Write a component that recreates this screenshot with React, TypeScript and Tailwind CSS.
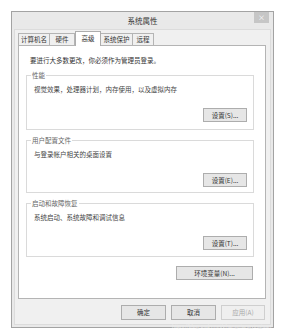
const tabs = [
  { label: "计算机名", w: "w-[32px]" },
  { label: "硬件", w: "w-[26px]" },
  { label: "高级", w: "w-[26px]", active: true },
  { label: "系统保护", w: "w-[33px]" },
  { label: "远程", w: "w-[22px]" },
];

interface GroupProps {
  title: string;
  desc: string;
  button: string;
  h: string;
}

function Group({ title, desc, button, h }: GroupProps) {
  return (
    <div className={`relative mt-[10px] border border-[#dadada] flex flex-col ${h}`}>
      <span className="absolute -top-[5px] left-[4px] px-[1px] bg-white text-[6.5px] leading-[9px] text-[#666]">
        {title}
      </span>
      <div className="pl-[7px] pt-[9px] text-[6.5px] leading-[9px] text-[#444]">{desc}</div>
      <div className="flex justify-end pr-[6px] mt-[14px]">
        <Btn label={button} w="w-[44px]" />
      </div>
    </div>
  );
}

function Btn({ label, w, disabled = false }: { label: string; w: string; disabled?: boolean }) {
  return (
    <div
      className={`${w} h-[14px] flex items-center justify-center border text-[6.5px] leading-none ${
        disabled
          ? "border-[#cfcfcf] bg-[#efefef] text-[#a8a8a8]"
          : "border-[#adadad] bg-[#e6e6e6] text-[#333]"
      }`}
    >
      {label}
    </div>
  );
}

export default function App() {
  return (
    <div className="relative w-[300px] h-[336px] bg-white pt-[11px] pl-[11px] font-['Noto_Sans_CJK_SC','Liberation_Sans',sans-serif]">
      <div className="w-[263px] h-[317px] border border-[#a3a3a3] bg-[#e9e9e9] flex flex-col">
        {/* title bar */}
        <div className="relative h-[17px] flex items-center justify-center text-[7.5px] text-[#333]">
          系统属性
          <div className="absolute right-[4px] top-0 w-[15px] h-[11px] bg-[#c6c6c6] flex items-center justify-center text-white text-[7px] leading-none">
            ×
          </div>
        </div>

        <div className="mx-[2px] mb-[2px] flex-1 border border-[#dcdcdc] bg-[#f0f0f0] pl-[3px] pr-[4px] pt-[1px] flex flex-col">
          {/* tabs */}
          <div className="flex items-end h-[14px]">
            {tabs.map((t) =>
              t.active ? (
                <div
                  key={t.label}
                  className={`${t.w} h-[15px] -mb-[1px] relative z-10 bg-white border border-b-0 border-[#adadad] flex items-center justify-center text-[6.5px] text-[#333]`}
                >
                  {t.label}
                </div>
              ) : (
                <div
                  key={t.label}
                  className={`${t.w} h-[12px] bg-[#f0f0f0] border border-b-0 border-[#b4b4b4] -ml-[1px] first:ml-0 flex items-center justify-center text-[6.5px] text-[#333]`}
                >
                  {t.label}
                </div>
              )
            )}
          </div>

          {/* panel */}
          <div className="h-[254px] bg-white border border-[#b4b4b4] pl-[7px] pr-[11px] pt-[10px] flex flex-col">
            <div className="pl-[4px] text-[6.5px] leading-[9px] text-[#333]">
              要进行大多数更改，你必须作为管理员登录。
            </div>
            <Group title="性能" desc="视觉效果，处理器计划，内存使用，以及虚拟内存" button="设置(S)..." h="h-[55px]" />
            <Group title="用户配置文件" desc="与登录帐户相关的桌面设置" button="设置(E)..." h="h-[53px]" />
            <Group title="启动和故障恢复" desc="系统启动、系统故障和调试信息" button="设置(T)..." h="h-[54px]" />
            <div className="flex justify-end mt-[9px] pr-[1px]">
              <Btn label="环境变量(N)..." w="w-[77px]" />
            </div>
          </div>

          {/* dialog buttons */}
          <div className="flex justify-end gap-[5px] mt-[6px] pr-[1px]">
            <div className="h-[15px] flex gap-[5px]">
              <Btn label="确定" w="w-[45px] !h-[15px]" />
              <Btn label="取消" w="w-[45px] !h-[15px]" />
              <Btn label="应用(A)" w="w-[44px] !h-[15px]" disabled />
            </div>
          </div>
        </div>
      </div>
      <div className="absolute left-[172px] top-[324px] text-[5.5px] leading-none text-[#ececec] font-['Liberation_Sans',sans-serif]">
        https://blog.csdn.net/zhangxiangyingjuan
      </div>
    </div>
  );
}
